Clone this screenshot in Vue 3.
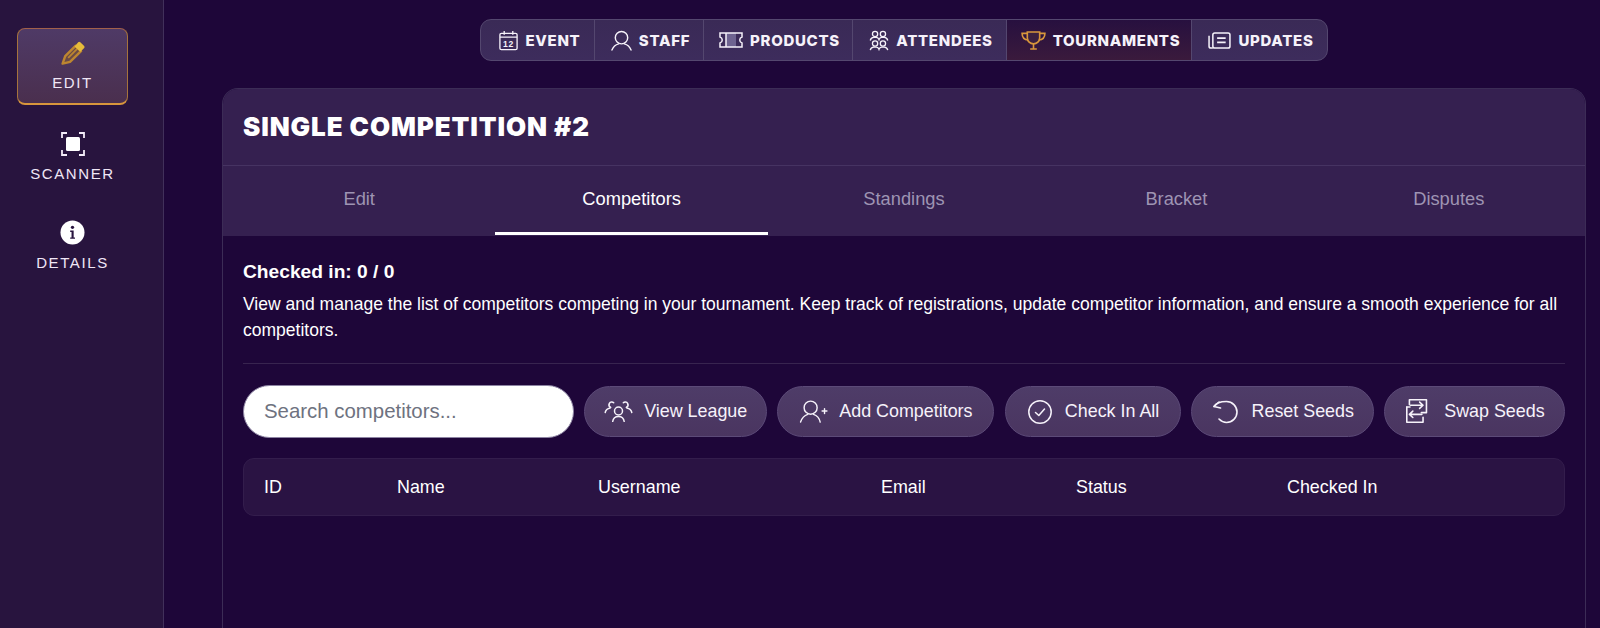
<script setup>
const columns = ['ID', 'Name', 'Username', 'Email', 'Status', 'Checked In']
const tabs = ['Edit', 'Competitors', 'Standings', 'Bracket', 'Disputes']
</script>

<template>
  <div class="page">
    <aside class="sidebar">
      <button class="side-item active">
        <svg class="side-icon" viewBox="0 0 24 24" width="24" height="24" fill="none">
          <path d="M4.2 15.2 L14.5 4.8 L20 10.2 L9 20.8 L1.6 22.6 Z" fill="#6b4a45" stroke="#bd8630" stroke-width="2.4" stroke-linejoin="round" />
          <path d="M7.2 16.8 L16.6 7.4" stroke="#bd8630" stroke-width="1.8" />
          <path d="M13.6 5.4 L17.2 1.2 Q18.2 .3 19.3 1.2 L23.2 5 Q24 6 23.2 7 L19.4 10.8 Z" fill="#e6bb3a" />
        </svg>
        <span>EDIT</span>
      </button>
      <button class="side-item">
        <svg class="side-icon" viewBox="0 0 24 24" width="24" height="24">
          <path d="M6 1 H1 V6 M18 1 H23 V6 M1 18 V23 H6 M23 18 V23 H18" fill="none" stroke="#f3ecf8" stroke-width="1.8" />
          <rect x="5" y="5" width="14" height="14" rx="1.5" fill="#fff" />
        </svg>
        <span>SCANNER</span>
      </button>
      <button class="side-item">
        <svg class="side-icon" viewBox="0 0 26 26" width="25" height="25">
          <circle cx="13" cy="13" r="12.5" fill="#fff" />
          <circle cx="13" cy="7.6" r="1.7" fill="#28143e" />
          <path d="M10.6 11 H14.2 V18.2 H15.6 V19.6 H10.6 V18.2 H12 V12.4 H10.6 Z" fill="#28143e" />
        </svg>
        <span>DETAILS</span>
      </button>
    </aside>

    <main class="main">
      <nav class="topnav">
        <a class="nav-item">
          <svg viewBox="0 0 22 22" width="21" height="21" fill="none" stroke="currentColor" stroke-width="1.4">
            <rect x="2" y="3.5" width="18" height="17" rx="1.5" />
            <path d="M2 7.5 H20 M6.5 1 V5 M15.5 1 V5" />
            <text x="11" y="17.6" text-anchor="middle" class="cal-num">12</text>
          </svg>
          EVENT
        </a>
        <a class="nav-item">
          <svg viewBox="0 0 22 22" width="21" height="21" fill="none" stroke="currentColor" stroke-width="1.5">
            <circle cx="11" cy="8" r="6.5" />
            <path d="M1 21 C2.5 17 6 15 8 14.5 M21 21 C19.5 17 16 15 14 14.5" stroke-linecap="round" />
          </svg>
          STAFF
        </a>
        <a class="nav-item">
          <svg viewBox="0 0 24 22" width="24" height="22" fill="none" stroke="currentColor" stroke-width="1.5">
            <rect x="7" y="4" width="10" height="14" fill="#6e6390" stroke="none" />
            <path d="M1 4 H23 V8 C20 9 20 13 23 14 V18 H1 V14 C4 13 4 9 1 8 Z" />
            <path d="M7 4 V18" />
          </svg>
          PRODUCTS
        </a>
        <a class="nav-item">
          <svg viewBox="0 0 22 24" width="20" height="21" fill="none" stroke="currentColor" stroke-width="1.5">
            <circle cx="6.5" cy="4.5" r="3" />
            <circle cx="15.5" cy="4.5" r="3" />
            <path d="M1 12 C1.5 9.5 3.5 8.5 5 8.5 H8 C9.5 8.5 10.5 9.5 11 11 C11.5 9.5 12.5 8.5 14 8.5 H17 C18.5 8.5 20.5 9.5 21 12" />
            <circle cx="6.5" cy="15.5" r="3" />
            <circle cx="15.5" cy="15.5" r="3" />
            <path d="M1 23 C1.5 20.5 3.5 19.5 5 19.5 H8 C9.5 19.5 10.5 20.5 11 22 C11.5 20.5 12.5 19.5 14 19.5 H17 C18.5 19.5 20.5 20.5 21 23" />
          </svg>
          ATTENDEES
        </a>
        <a class="nav-item current">
          <svg viewBox="0 0 26 20" width="25" height="19" fill="none" stroke="#d8963c" stroke-width="1.7">
            <path d="M6.5 1 H19.5 V7 C19.5 11 16.5 13.5 13 13.5 C9.5 13.5 6.5 11 6.5 7 Z" fill="#3a2040" />
            <path d="M6.5 2.5 H1 C1 6 3 9 7.5 9.5 M19.5 2.5 H25 C25 6 23 9 18.5 9.5" />
            <path d="M13 13.5 V18.5 M9.5 19 H16.5" />
          </svg>
          TOURNAMENTS
        </a>
        <a class="nav-item">
          <svg viewBox="0 0 24 20" width="23" height="19" fill="none" stroke="currentColor" stroke-width="1.6">
            <rect x="5" y="2" width="18" height="16" rx="2" />
            <path d="M5 18 H3 C1.8 18 1 17 1 16 V5" />
            <path d="M9.5 7.5 H18.5 M9.5 12 H18.5" stroke-width="1.9" />
          </svg>
          UPDATES
        </a>
      </nav>

      <section class="card">
        <header class="card-head">
          <h1>SINGLE COMPETITION #2</h1>
        </header>
        <div class="tabs">
          <div v-for="t in tabs" :key="t" class="tab" :class="{ on: t === 'Competitors' }">{{ t }}</div>
        </div>
        <div class="card-body">
          <div class="checked">Checked in: 0 / 0</div>
          <p class="desc">View and manage the list of competitors competing in your tournament. Keep track of registrations, update competitor information, and ensure a smooth experience for all competitors.</p>
          <div class="rule"></div>
          <div class="toolbar">
            <input class="search" placeholder="Search competitors..." />
            <button class="pill">
              <svg viewBox="0 0 28.6 21" width="29" height="21" fill="none" stroke="currentColor" stroke-width="1.5" stroke-linecap="round">
                <circle cx="14.3" cy="10" r="4" />
                <path d="M8.5 20.5 C9 17 11.5 15.5 14.3 15.5 C17 15.5 19.5 17 20 20.5" />
                <path d="M9.5 1.8 C8.5 .8 6 .8 5.2 2.3 C4.3 4 5 5.7 6.5 6.5 M6 7 C3.5 7.5 1.5 9 1 11.5" />
                <path d="M19.1 1.8 C20.1 .8 22.6 .8 23.4 2.3 C24.3 4 23.6 5.7 22.1 6.5 M22.6 7 C25.1 7.5 27.1 9 27.6 11.5" />
              </svg>
              View League
            </button>
            <button class="pill">
              <svg viewBox="0 0 30 24" width="29" height="23" fill="none" stroke="currentColor" stroke-width="1.5" stroke-linecap="round">
                <circle cx="12" cy="8" r="6.8" />
                <path d="M1.5 23 C3 18.5 6 16 9 15 M22 23 C21 18.5 18 16 15 15" />
                <path d="M24 11.5 H29 M26.5 9 V14" />
              </svg>
              Add Competitors
            </button>
            <button class="pill roomy">
              <svg viewBox="0 0 24 24" width="24" height="24" fill="none" stroke="currentColor" stroke-width="1.5" stroke-linecap="round" stroke-linejoin="round">
                <circle cx="12" cy="12" r="11.2" />
                <path d="M7.5 12.5 L10.8 15.5 L16.5 9" />
              </svg>
              Check In All
            </button>
            <button class="pill roomy">
              <svg viewBox="0 0 26 24" width="26" height="24" fill="none" stroke="currentColor" stroke-width="1.6" stroke-linecap="round" stroke-linejoin="round">
                <path d="M1 6.5 C3 3 8 1.5 13.5 1.5 A10.5 10.5 0 0 1 13.5 22.5 C10.5 22.5 8 21 6 19" />
                <path d="M6 2 L1 6.5 L7.5 8" />
              </svg>
              Reset Seeds
            </button>
            <button class="pill roomy">
              <svg viewBox="0 0 22 22" width="25" height="25" fill="none" stroke="currentColor" stroke-width="1.4" stroke-linejoin="round" stroke-linecap="round">
                <path d="M3 5 V.7 H18 V12 H13.5" />
                <path d="M.7 7 V20.5 H15 V16" />
                <path d="M.7 7 H3.5" />
                <path d="M4 5.5 H15 M12 2.7 L15 5.5 L12 8.3" />
                <path d="M3 13.5 H14 M6 10.7 L3 13.5 L6 16.3" />
              </svg>
              Swap Seeds
            </button>
          </div>
          <div class="table-head">
            <div v-for="c in columns" :key="c">{{ c }}</div>
          </div>
        </div>
      </section>
    </main>
  </div>
</template>

<style>
html, body {
  margin: 0;
  background: #1e0639;
  overflow: hidden;
}
</style>

<style scoped>
.page {
  display: flex;
  height: 628px;
  overflow: hidden;
  background: #1e0639;
  font-family: "Liberation Sans", Arial, sans-serif;
  color: #fff;
}

.sidebar {
  width: 164px;
  flex: none;
  box-sizing: border-box;
  background: #28143e;
  border-right: 1px solid #41305a;
  display: flex;
  flex-direction: column;
  align-items: flex-start;
  padding: 28px 0 0 17px;
}

.side-item {
  width: 111px;
  height: 77px;
  flex: none;
  box-sizing: border-box;
  border: 0;
  background: none;
  padding: 13px 0 0;
  display: flex;
  flex-direction: column;
  align-items: center;
  gap: 9px;
  color: #f0e6f6;
  font-family: "Liberation Sans", sans-serif;
  font-size: 15px;
  letter-spacing: 1.6px;
  margin-bottom: 11px;
}

.side-item.active {
  border: 1.5px solid;
  border-color: #a2604a #a6733d #d8963c;
  border-bottom-width: 2px;
  border-radius: 8px;
  background: linear-gradient(#4f3a66, #4a2f4e);
  padding-top: 11.5px;
  margin-bottom: 14px;
}

.side-icon {
  display: block;
}

.main {
  flex: 1;
  min-width: 0;
  padding: 19px 14px 0 58px;
  display: flex;
  flex-direction: column;
  align-items: center;
  gap: 27px;
}

.topnav {
  display: grid;
  grid-template-columns: 114px 109px 149px 154px 185px 135px;
  height: 42px;
  flex: none;
  box-sizing: border-box;
  border: 1px solid #54476f;
  border-radius: 11px;
  background: linear-gradient(#3a2a56, #3d2c5c);
  overflow: hidden;
}

.nav-item {
  display: flex;
  align-items: center;
  justify-content: center;
  gap: 7px;
  padding-left: 3px;
  font-family: Inter, "Liberation Sans", sans-serif;
  font-weight: 800;
  font-size: 15px;
  letter-spacing: 0.7px;
  border-right: 1px solid #54476f;
  color: #f6f2fa;
}

.nav-item:last-child {
  border-right: 0;
}

.nav-item.current {
  background: linear-gradient(#27103f, #3a1a3c);
}

.cal-num {
  font-family: "Liberation Sans", sans-serif;
  font-size: 9px;
  fill: currentColor;
  stroke: none;
}

.card {
  width: 100%;
  flex: 1;
  box-sizing: border-box;
  border: 1px solid #3c2c56;
  border-bottom: 0;
  border-radius: 16px 16px 0 0;
  overflow: hidden;
}

.card-head {
  height: 77px;
  box-sizing: border-box;
  display: flex;
  align-items: center;
  padding: 0 20px 2px;
  background: #352050;
  border-bottom: 1px solid #463362;
}

.card-head h1 {
  margin: 0;
  font-family: Inter, "Liberation Sans", sans-serif;
  font-weight: 900;
  font-size: 26px;
  letter-spacing: 0.9px;
}

.tabs {
  display: grid;
  grid-template-columns: repeat(5, 1fr);
  height: 70px;
  background: #352050;
}

.tab {
  display: flex;
  align-items: center;
  justify-content: center;
  font-size: 18.3px;
  color: #9e94b3;
  margin-bottom: 1.5px;
  border-bottom: 3px solid transparent;
  box-sizing: border-box;
}

.tab.on {
  color: #fff;
  border-bottom-color: #fff;
}

.card-body {
  padding: 24px 20px 0;
}

.checked {
  font-size: 19.2px;
  font-weight: 700;
  line-height: 24px;
}

.desc {
  margin: 7px 0 0;
  font-size: 17.53px;
  line-height: 26px;
}

.rule {
  height: 1px;
  background: #38244f;
  margin: 20px 0 21px;
}

.toolbar {
  display: flex;
  align-items: center;
  justify-content: space-between;
}

.search {
  width: 331px;
  height: 53px;
  box-sizing: border-box;
  border: 1px solid #8d84a3;
  border-radius: 27px;
  padding: 0 20px;
  font: 20.4px "Liberation Sans", sans-serif;
  background: #fff;
  outline: none;
}

.search::placeholder {
  color: #6e7280;
}

.pill {
  height: 51px;
  box-sizing: border-box;
  display: flex;
  align-items: center;
  justify-content: center;
  gap: 11px;
  border: 1px solid #5c4a78;
  border-radius: 26px;
  background: linear-gradient(#4e3c68, #4a3560);
  color: #f6f2fa;
  font-family: "Liberation Sans", sans-serif;
  font-size: 17.9px;
  padding: 0;
  white-space: nowrap;
}

.pill.roomy {
  gap: 13px;
  padding-left: 2px;
}

.pill:nth-of-type(1) { width: 183px; }
.pill:nth-of-type(2) { width: 217px; }
.pill:nth-of-type(3) { width: 176px; }
.pill:nth-of-type(4) { width: 183px; }
.pill:nth-of-type(5) { width: 181px; }

.table-head {
  margin-top: 20px;
  height: 58px;
  box-sizing: border-box;
  display: grid;
  grid-template-columns: 133px 201px 283px 195px 211px 1fr;
  align-items: center;
  padding: 0 20px;
  background: #2a1343;
  border: 1px solid #331d4c;
  border-radius: 11px;
  font-size: 17.9px;
}
</style>
